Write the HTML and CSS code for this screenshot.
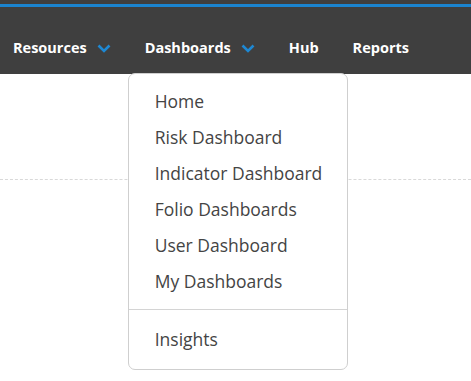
FILE: index.html
```html
<!DOCTYPE html>
<html lang="en">
<head>
    <meta charset="UTF-8">
    <meta name="viewport" content="width=device-width, initial-scale=1.0">
    <title>Dashboards Menu</title>
    <link rel="stylesheet" href="styles.css">
</head>
<body>
    <header class="site-header">
        <div class="accent-line"></div>
        <nav class="main-nav">
            <div class="nav-item">
                <span>Resources</span>
                <svg class="chevron" width="14" height="9" viewBox="0 0 14 9"><path d="M1.5 1.5 L7 7 L12.5 1.5" fill="none" stroke="#1e88d3" stroke-width="2.6"/></svg>
            </div>
            <div class="nav-item open">
                <span>Dashboards</span>
                <svg class="chevron" width="14" height="9" viewBox="0 0 14 9"><path d="M1.5 1.5 L7 7 L12.5 1.5" fill="none" stroke="#1e88d3" stroke-width="2.6"/></svg>
                <ul class="dropdown">
                    <li>Home</li>
                    <li>Risk Dashboard</li>
                    <li>Indicator Dashboard</li>
                    <li>Folio Dashboards</li>
                    <li>User Dashboard</li>
                    <li>My Dashboards</li>
                    <li class="divider"></li>
                    <li>Insights</li>
                </ul>
            </div>
            <div class="nav-item"><span>Hub</span></div>
            <div class="nav-item"><span>Reports</span></div>
        </nav>
    </header>

    <main class="content">
        <div class="dashed-rule"></div>
    </main>
</body>
</html>
```

FILE: styles.css
```css
body {
    margin: 0;
    padding: 0;
    min-height: 381px;
    font-family: 'Open Sans', 'Noto Sans', sans-serif;
    background-color: #ffffff;
}

.site-header {
    background-color: #3f3f3f;
    padding-top: 4px;
}

.accent-line {
    height: 3px;
    background-color: #1b84cf;
}

.main-nav {
    box-sizing: border-box;
    display: flex;
    align-items: center;
    height: 67px;
    padding: 14px 0 0 13px;
}

.nav-item {
    position: relative;
    display: flex;
    align-items: center;
    color: #ffffff;
    font-size: 14.5px;
    line-height: 20px;
    font-weight: 700;
    margin-right: 34px;
}

.nav-item .chevron {
    margin-left: 10px;
    margin-top: 1px;
}

.dropdown {
    position: absolute;
    top: 35px;
    left: -17px;
    width: 218px;
    margin: 0;
    padding: 9px 0 12px;
    list-style: none;
    background-color: #ffffff;
    border: 1px solid #cfcfcf;
    border-radius: 7px;
    z-index: 2;
}

.dropdown li {
    padding: 0 26px;
    height: 36px;
    line-height: 36px;
    font-size: 17.5px;
    font-weight: 400;
    color: #444444;
    white-space: nowrap;
}

.dropdown .divider {
    height: 0;
    padding: 0;
    border-top: 1px solid #d4d4d4;
    margin: 10px 0 11px;
}

.content {
    padding-top: 105px;
}

.dashed-rule {
    border-top: 1px dashed #d9d9d9;
}
```
